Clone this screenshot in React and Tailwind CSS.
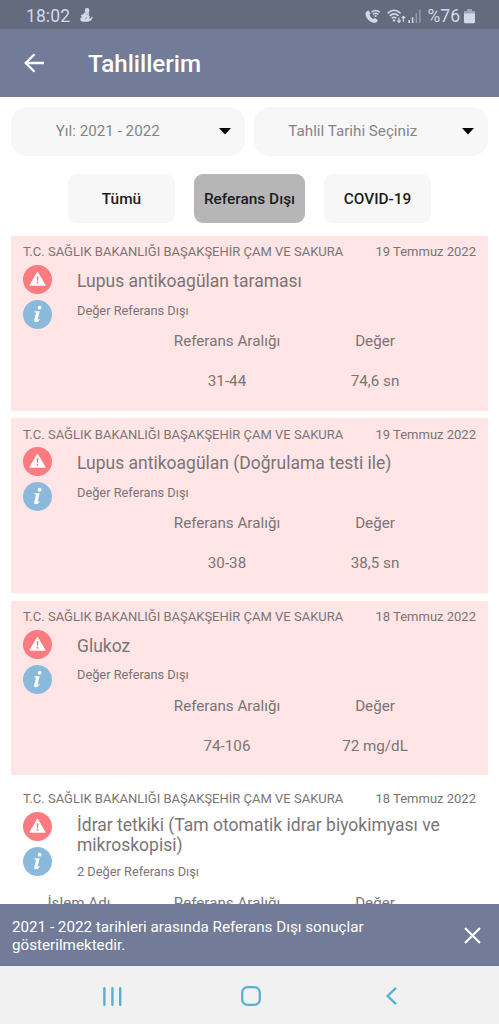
import { useState } from "react";

const HOSPITAL = "T.C. SAĞLIK BAKANLIĞI BAŞAKŞEHİR ÇAM VE SAKURA";

const results = [
  { id: 1, date: "19 Temmuz 2022", title: "Lupus antikoagülan taraması", note: "Değer Referans Dışı", range: "31-44", value: "74,6 sn", out: true },
  { id: 2, date: "19 Temmuz 2022", title: "Lupus antikoagülan (Doğrulama testi ile)", note: "Değer Referans Dışı", range: "30-38", value: "38,5 sn", out: true },
  { id: 3, date: "18 Temmuz 2022", title: "Glukoz", note: "Değer Referans Dışı", range: "74-106", value: "72 mg/dL", out: true },
  { id: 4, date: "18 Temmuz 2022", title: "İdrar tetkiki (Tam otomatik idrar biyokimyası ve mikroskopisi)", note: "2 Değer Referans Dışı", group: true },
];

function StatusBar() {
  return (
    <div className="h-[29px] shrink-0 bg-[#646b7e] flex items-center justify-between pl-[26px] pr-[24px] pt-[3px] text-[#d3d8ea]">
      <div className="flex items-center gap-[10px]">
        <span className="text-[17.5px] leading-5 tracking-[0.1px]">18:02</span>
        <svg className="-mt-[2px]" width="13" height="14" viewBox="0 0 13 14" fill="currentColor">
          <circle cx="7.1" cy="2.4" r="2.3" />
          <path d="M4.4 4.4 8.8 4.2 8.8 7 9.8 8.6 9.2 10.4 10.4 10.6 12 8.4 12.8 9.4 11 12.6 8 13.8H2.6L.4 12.6.4 10.2 2.2 8.8 1.4 8.4 1 7 3.4 6.2Z" />
          <path d="M5.4 10.6 7 9.4M7.4 5.8 6.8 7" stroke="#646b7e" strokeWidth="0.7" />
        </svg>
      </div>
      <div className="flex items-center">
        <svg width="16" height="15" viewBox="0 0 16 15" fill="none" stroke="currentColor">
          <path d="M.6 3.4 3.4 1.2 5.6 4.4 4.5 5.8C5.2 7.6 6.4 9 8.3 10L10 9 13 11.2 11 13.8C5.6 14.4 0 9.2.6 3.4Z" fill="currentColor" stroke="none" />
          <path d="M6.5 3.2Q10.5-.4 14.8 3.2M8 5.4Q10.6 3.2 13.3 5.4" strokeWidth="1.4" />
          <circle cx="10.6" cy="7" r="1.1" fill="currentColor" stroke="none" />
        </svg>
        <svg className="ml-[6px]" width="20" height="15" viewBox="0 0 20 15" fill="none" stroke="currentColor" strokeWidth="1.5">
          <path d="M.6 4.4Q7-1.8 13.6 4.4M2.7 6.9Q7 2.8 11.5 6.9M4.7 9.3Q7 7.2 9.4 9.3" />
          <circle cx="7" cy="11.4" r="1.2" fill="currentColor" stroke="none" />
          <path d="M12 8.4V13M10.2 11.4 12 13.3 13.8 11.4M16.4 12.8V7.6M14.6 9.2 16.4 7.3 18.2 9.2" strokeWidth="1.2" />
        </svg>
        <svg className="ml-[1px]" width="14" height="15" viewBox="0 0 14 15" fill="currentColor">
          <rect x="0.4" y="11" width="1.6" height="3" />
          <rect x="3.8" y="8.4" width="1.6" height="5.6" />
          <rect x="7.6" y="4" width="1.4" height="10" opacity="0.45" />
          <rect x="11.2" y="0.6" width="1.4" height="13.4" opacity="0.45" />
        </svg>
        <span className="ml-[6px] text-[17.5px] leading-5">%76</span>
        <svg className="ml-[4px]" width="11" height="15" viewBox="0 0 11 15" fill="currentColor">
          <path d="M3 0h5v2h2q1 0 1 1v2H0V3q0-1 1-1h2Z" opacity="0.55" />
          <path d="M0 4.6h11V13q0 1.3-1.3 1.3H1.3Q0 14.3 0 13Z" />
        </svg>
      </div>
    </div>
  );
}

function Select({ label, className }) {
  return (
    <button className={`h-[49px] flex items-center rounded-[16px] bg-[#f7f7f7] text-[#858585] text-[15.2px] pr-[14px] ${className}`}>
      <span className="flex-1 text-center">{label}</span>
      <svg width="12" height="7" viewBox="0 0 12 7">
        <path d="M0 0H12L6 6.6Z" fill="#000" />
      </svg>
    </button>
  );
}

function WarnIcon() {
  return (
    <svg width="29" height="29" viewBox="0 0 29 29">
      <circle cx="14.5" cy="14.5" r="14.5" fill="#fb7b80" />
      <path d="M14.5 7 22.2 20.3H6.8Z" fill="#fff" stroke="#fff" strokeWidth="0.8" strokeLinejoin="round" />
      <path d="M13.7 11.3h1.7l-.4 4.8h-.9Z" fill="#d8777f" />
      <circle cx="14.5" cy="17.8" r="0.9" fill="#d8777f" />
    </svg>
  );
}

function InfoIcon() {
  return (
    <svg width="29" height="29" viewBox="0 0 29 29">
      <circle cx="14.5" cy="14.5" r="14.5" fill="#8bb9dc" />
      <circle cx="16.6" cy="7.7" r="1.9" fill="#fff" />
      <path d="M11.4 11.2H16.7L14.6 19.4Q14.5 20.4 16.5 19L16.9 19.5Q15 22.2 12.8 22.2 10.7 22.2 11.3 19.7L13 13.2Q13.1 12.2 11.3 12.2Z" fill="#fff" />
    </svg>
  );
}

function ResultCard({ item }) {
  return (
    <div className={`mb-[7.8px] min-h-[174.5px] shrink-0 pt-[5px] ${item.out ? "bg-[#ffe5e5]" : ""}`}>
      <div className="flex items-center justify-between px-[12px] h-[21px] pt-[1px] text-[13px] whitespace-nowrap">
        <span>{HOSPITAL}</span>
        <span>{item.date}</span>
      </div>
      <div className="flex pl-[12px]">
        <div className="w-[54px] shrink-0 flex flex-col gap-[6px] pt-[3px] -mb-[20px]">
          <WarnIcon />
          <InfoIcon />
        </div>
        <div className="flex-1 pt-[4px] pr-[36px]">
          <div className="min-h-[30px] py-[2.5px] flex items-center text-[17.5px] leading-5">{item.title}</div>
          <div className="mt-[4.5px] h-[20px] text-[12.8px] leading-5">{item.note}</div>
        </div>
      </div>
      <div className="grid grid-cols-[148px_148px_148px] -ml-[6px] pt-[0.5px] text-center text-[15.2px] leading-[40px]">
        <span>{item.group ? "İşlem Adı" : ""}</span>
        <span>Referans Aralığı</span>
        <span>Değer</span>
        <span></span>
        <span>{item.range}</span>
        <span>{item.value}</span>
      </div>
    </div>
  );
}

export default function App() {
  const [filter, setFilter] = useState("ref");
  const [showInfo, setShowInfo] = useState(true);

  const tab = (key) => (filter === key ? "bg-[#b6b6b6]" : "bg-[#f7f7f7]");

  return (
    <div className="w-[499px] h-[1024px] flex flex-col overflow-hidden bg-white font-['Roboto',sans-serif] text-[#7b7475]">
      <StatusBar />
      <header className="h-[68px] shrink-0 bg-[#727b97] flex items-center pl-[24px] text-white">
        <svg width="21" height="20" viewBox="0 0 21 20" fill="none" stroke="currentColor" strokeWidth="2.3">
          <path d="M20 10H2M10.5 1.2 1.7 10l8.8 8.8" />
        </svg>
        <h1 className="ml-[43px] pt-[2px] text-[24.2px] font-medium">Tahlillerim</h1>
      </header>

      <div className="shrink-0 flex gap-[9px] px-[11px] pt-[10px]">
        <Select label="Yıl: 2021 - 2022" className="w-[234px] [&>span]:pr-[14px]" />
        <Select label="Tahlil Tarihi Seçiniz" className="w-[235px] [&>span]:pr-[10px]" />
      </div>

      <div className="shrink-0 flex gap-[19px] pl-[68px] pt-[18px] text-[15.4px] font-medium text-[#1c1c1c]">
        <button onClick={() => setFilter("all")} className={`w-[107px] h-[49px] pt-[2px] rounded-[9px] ${tab("all")}`}>Tümü</button>
        <button onClick={() => setFilter("ref")} className={`w-[111px] h-[49px] pt-[2px] rounded-[9px] ${tab("ref")}`}>Referans Dışı</button>
        <button onClick={() => setFilter("covid")} className={`w-[107px] h-[49px] pt-[2px] rounded-[9px] ${tab("covid")}`}>COVID-19</button>
      </div>

      <main className="flex-1 min-h-0 overflow-hidden mt-[13px] px-[11px] flex flex-col">
        {results.map((r) => (
          <ResultCard key={r.id} item={r} />
        ))}
      </main>

      {showInfo && (
        <div className="h-[62px] shrink-0 bg-[#727b97] text-white flex items-center pl-[12px] pr-[18px]">
          <p className="flex-1 pt-[1px] text-[15.2px] leading-[18px]">
            2021 - 2022 tarihleri arasında Referans Dışı sonuçlar
            <br />
            gösterilmektedir.
          </p>
          <button onClick={() => setShowInfo(false)}>
            <svg width="17" height="17" viewBox="0 0 17 17" fill="none" stroke="currentColor" strokeWidth="2.2">
              <path d="M1 1 16 16M16 1 1 16" />
            </svg>
          </button>
        </div>
      )}

      <nav className="h-[58px] shrink-0 bg-[#f1f1f2] flex items-center pl-[103px] pt-[2px] text-[#58afd1]">
        <svg width="19" height="19" viewBox="0 0 19 19" fill="none" stroke="currentColor" strokeWidth="2.4" strokeLinecap="round">
          <path d="M1.4 1.2V17.8M9.4 1.2V17.8M17.2 1.2V17.8" />
        </svg>
        <svg className="ml-[119px]" width="20" height="20" viewBox="0 0 20 20" fill="none" stroke="currentColor" strokeWidth="2.3">
          <rect x="1.2" y="1.2" width="17.6" height="17.6" rx="5.4" />
        </svg>
        <svg className="ml-[125px]" width="11" height="18" viewBox="0 0 11 18" fill="none" stroke="currentColor" strokeWidth="2.4">
          <path d="M10 .8 1.6 9 10 17.2" />
        </svg>
      </nav>
    </div>
  );
}
